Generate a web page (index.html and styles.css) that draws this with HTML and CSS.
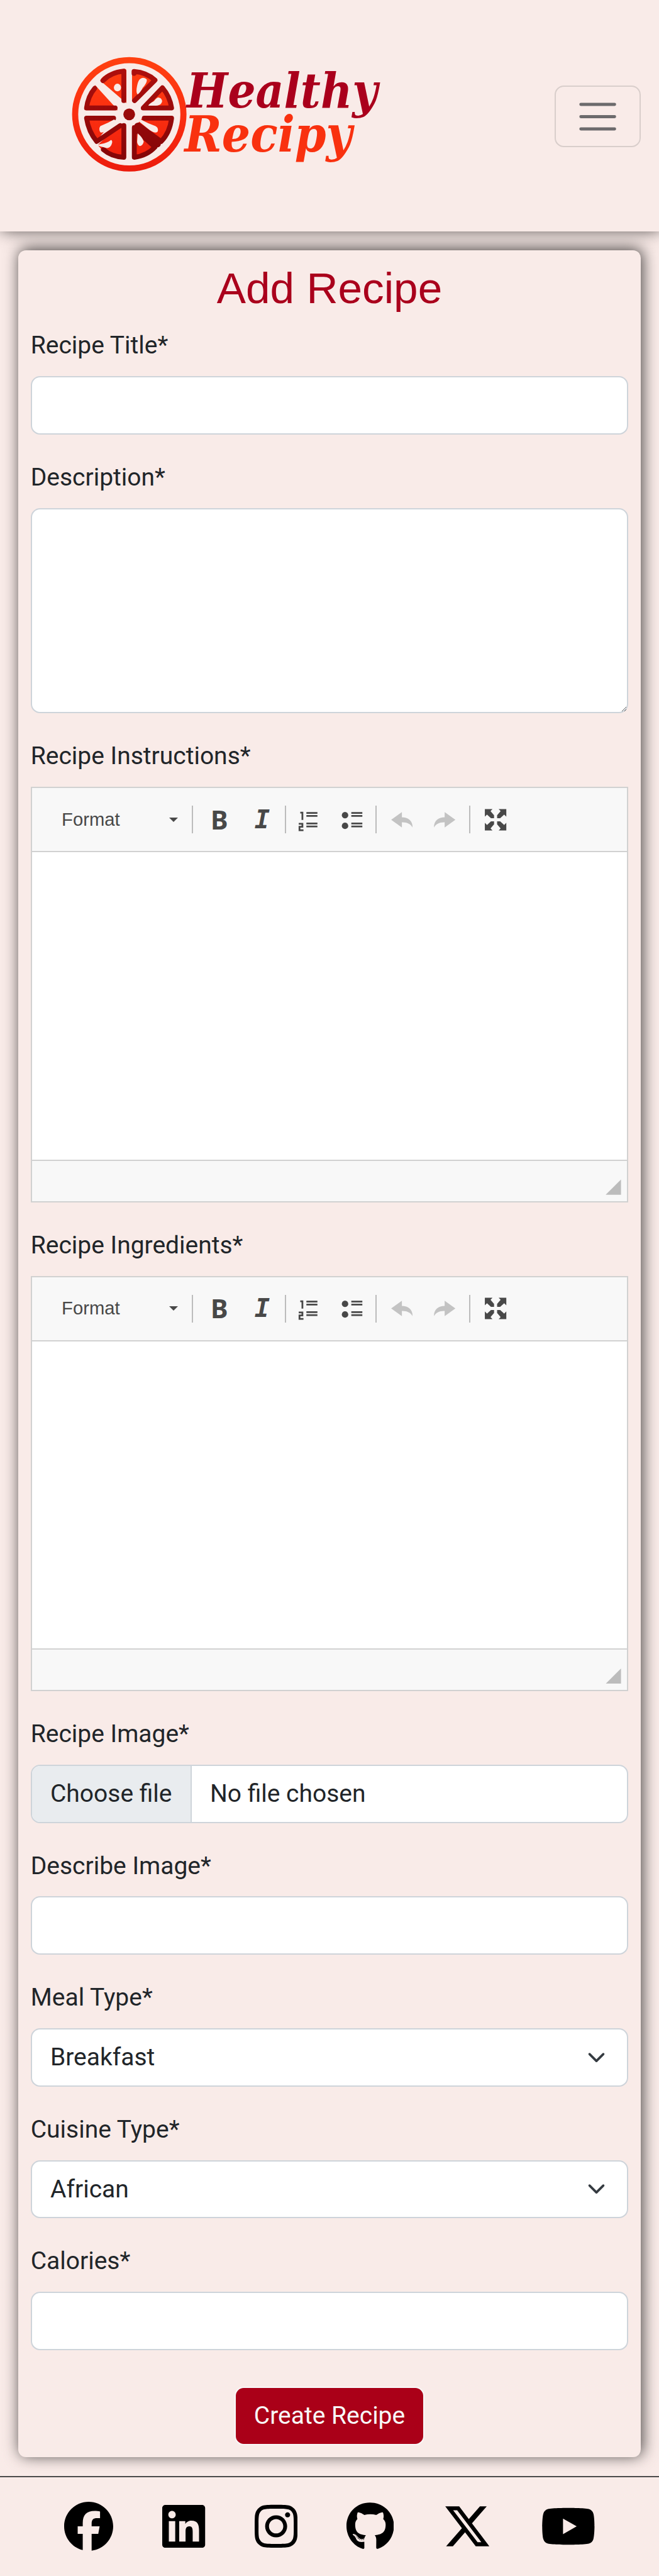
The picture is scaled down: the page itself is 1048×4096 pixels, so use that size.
FILE: index.html
```html
<!DOCTYPE html>
<html lang="en">
<head>
<meta charset="utf-8">
<title>Healthy Recipy - Add Recipe</title>
<link rel="stylesheet" href="styles.css">
</head>
<body>
<svg class="sprite" aria-hidden="true">
  <symbol id="i-ol" viewBox="0 0 16 16"><path d="M2 3.300h1.400v4.800M1 10.600h2.400v2H1.500v2.200h2.600M6 3.500h7.200M6 5.500h7.200M6 10.400h7.200M6 12.400h7.200" fill="none" stroke="currentColor" stroke-width="1.150"/></symbol>
  <symbol id="i-ul" viewBox="0 0 16 16"><circle cx="2.900" cy="5" r="2.100"/><circle cx="2.900" cy="12" r="2.100"/><path d="M7 3.500h7.200M7 5.500h7.200M7 10.400h7.200M7 12.400h7.200" fill="none" stroke="currentColor" stroke-width="1.150"/></symbol>
  <symbol id="i-undo" viewBox="0 0 16 16"><path d="M1 8 8 3v3.400c4 .1 7 2.200 7 6.600-1.300-2.300-3.500-3.500-7-3.400V13z"/></symbol>
  <symbol id="i-max" viewBox="0 0 16 16"><path d="M1 1h5L4.700 2.400 7 5v2H5L2.400 4.600 1 6z"/><path d="M15 1h-5l1.300 1.400L9 5v2h2l2.600-2.400L15 6zM1 15h5l-1.300-1.400L7 11V9H5l-2.600 2.400L1 10zM15 15h-5l1.300-1.400L9 11V9h2l2.600 2.400L15 10z"/></symbol>
</svg>

<header class="site-header">
  <a class="brand" href="#">
    <svg class="logo" viewBox="120 90 640 260" role="img" aria-label="Healthy Recipy">
      <defs>
        <linearGradient id="peel" gradientUnits="userSpaceOnUse" x1="0" y1="112" x2="0" y2="336"><stop offset="0" stop-color="#ff4111"/><stop offset=".5" stop-color="#fb2f10"/><stop offset="1" stop-color="#ec1b0c"/></linearGradient>
        <linearGradient id="rind" gradientUnits="userSpaceOnUse" x1="0" y1="135" x2="0" y2="313"><stop offset="0" stop-color="#ae0f0d"/><stop offset="1" stop-color="#840508"/></linearGradient>
      </defs>
      <circle cx="253.700" cy="224" r="106" fill="none" stroke="url(#peel)" stroke-width="12"/>
      <g fill="url(#peel)">
        <path d="M244 135Q248 135 248 139V202L197 158Q199 150 215 143T244 135z"/>
        <path d="M187 167 228 212 231 216H168Q165 216 166 210 171 185 187 167z"/>
        <path d="M259 137Q287 136 309 158L261 200 259 198z"/>
        <path d="M319 170Q337 188 340 211H280z"/>
        <path d="M168 230H226L190 276Q171 256 168 230z"/>
        <path d="M247 243V309Q220 308 198 291L192 284 237 242z"/>
        <path d="M260 245 306 285Q287 307 261 309z"/>
        <path d="M280 230H340Q337 260 317 278L272 240z"/>
      </g>
      <g fill="none" stroke="url(#rind)" stroke-width="9.500" stroke-linejoin="round" stroke-linecap="round">
        <path d="M202 158Q217 142 243 139.500V197"/>
        <path d="M186 173Q173 188 170 211.500H226"/>
        <path d="M263 144V140Q288 142 304 157L264 197"/>
        <path d="M318.500 172Q333 189 336.500 211.500H281z"/>
        <path d="M223 231.500H170Q174 258 190 277L236 246"/>
        <path d="M203 293Q219 307 243 308V246"/>
        <path d="M263.500 250V308Q288 305 304 288L264 252"/>
        <path d="M283 231.500H336.500Q333 260 316 277L272 245"/>
        <path d="M270 247 309 282" stroke-width="13"/>
      </g>
      <circle cx="253.500" cy="224" r="11.500" fill="url(#rind)"/>
      <g fill="#f9ebe8">
        <ellipse cx="230.500" cy="171.500" rx="7" ry="7.500"/>
        <path d="M276 154Q283 150 288 156 289 162 280 172 275 182 270 185 266 182 269 168 271 157 276 154z"/>
        <path d="M311 191Q317 192 318 198 317 206 306 207H291Q291 204 302 198 307 191 311 191z"/>
        <path d="M224 234 228 237 213 251Q203 262 197 259 193 253 197 247 212 241 224 234z"/>
        <path d="M276 234 273 238 290 252Q303 263 309 258 312 251 305 247 291 242 276 234z"/>
        <path d="M270 261Q279 268 282 277 280 286 274 286 269 283 269 277z"/>
        <path d="M198 282Q211 280 218 274 222 276 219 283 216 290 210 290L198 287 190 284z"/>
      </g>
      <text class="logo-top" x="366" y="210.500" font-size="95" textLength="374" lengthAdjust="spacingAndGlyphs">Healthy</text>
      <text class="logo-bottom" x="362" y="296.500" font-size="97" textLength="328" lengthAdjust="spacingAndGlyphs">Recipy</text>
    </svg>
  </a>
  <button class="toggler" type="button" aria-label="Toggle navigation">
    <svg viewBox="0 0 30 30"><path stroke="currentColor" stroke-linecap="round" stroke-miterlimit="10" stroke-width="2" d="M4 7h22M4 15h22M4 23h22"/></svg>
  </button>
</header>

<main class="card">
  <h1>Add Recipe</h1>
  <form>
    <div class="field"><label for="title">Recipe Title*</label><input id="title" class="control" type="text"></div>
    <div class="field"><label for="desc">Description*</label><textarea id="desc" class="control area"></textarea></div>
    <div class="field"><label>Recipe Instructions*</label>
      <div class="editor">
        <div class="toolbar">
          <div class="combo"><span>Format</span><i class="caret"></i></div>
          <div class="group g3"><b class="ico bold">B</b><i class="ico italic">I</i></div>
          <div class="group g1"><svg class="ico"><use href="#i-ol"/></svg><svg class="ico"><use href="#i-ul"/></svg></div>
          <div class="group g2 off"><svg class="ico"><use href="#i-undo"/></svg><svg class="ico flip"><use href="#i-undo"/></svg></div>
          <div class="group g2"><svg class="ico"><use href="#i-max"/></svg></div>
        </div>
        <div class="content"></div>
        <div class="bottom"><i class="grip"></i></div>
      </div>
    </div>
    <div class="field"><label>Recipe Ingredients*</label>
      <div class="editor">
        <div class="toolbar">
          <div class="combo"><span>Format</span><i class="caret"></i></div>
          <div class="group g3"><b class="ico bold">B</b><i class="ico italic">I</i></div>
          <div class="group g1"><svg class="ico"><use href="#i-ol"/></svg><svg class="ico"><use href="#i-ul"/></svg></div>
          <div class="group g2 off"><svg class="ico"><use href="#i-undo"/></svg><svg class="ico flip"><use href="#i-undo"/></svg></div>
          <div class="group g2"><svg class="ico"><use href="#i-max"/></svg></div>
        </div>
        <div class="content"></div>
        <div class="bottom"><i class="grip"></i></div>
      </div>
    </div>
    <div class="field"><label>Recipe Image*</label>
      <div class="control file"><span class="choose">Choose file</span><span class="name">No file chosen</span></div>
    </div>
    <div class="field"><label for="alt">Describe Image*</label><input id="alt" class="control" type="text"></div>
    <div class="field"><label>Meal Type*</label>
      <div class="control select"><span>Breakfast</span><svg viewBox="0 0 16 16"><path fill="none" stroke="#343a40" stroke-linecap="round" stroke-linejoin="round" stroke-width="2" d="m2 5 6 6 6-6"/></svg></div>
    </div>
    <div class="field"><label>Cuisine Type*</label>
      <div class="control select"><span>African</span><svg viewBox="0 0 16 16"><path fill="none" stroke="#343a40" stroke-linecap="round" stroke-linejoin="round" stroke-width="2" d="m2 5 6 6 6-6"/></svg></div>
    </div>
    <div class="field"><label for="cal">Calories*</label><input id="cal" class="control" type="text"></div>
    <button class="submit" type="button">Create Recipe</button>
  </form>
</main>

<footer class="social">
  <svg class="w32" viewBox="0 0 512 512"><path d="M512 256C512 114.600 397.400 0 256 0S0 114.600 0 256C0 376 82.700 476.800 194.200 504.500V334.200H141.400V256h52.800V222.300c0-87.100 39.400-127.500 125-127.500c16.200 0 44.200 3.200 55.700 6.400V172c-6-.6-16.500-1-29.600-1c-42 0-58.200 15.900-58.200 57.200V256h83.600l-14.400 78.200H287V510.100C413.800 494.800 512 386.900 512 256h0z"/></svg>
  <svg class="w28" viewBox="0 0 448 512"><path d="M416 32H31.900C14.300 32 0 46.500 0 64.300v383.400C0 465.500 14.300 480 31.900 480H416c17.600 0 32-14.500 32-32.300V64.300c0-17.800-14.400-32.300-32-32.300zM135.400 416H69V202.200h66.500V416zm-33.200-243c-21.300 0-38.500-17.300-38.500-38.500S80.900 96 102.200 96c21.200 0 38.500 17.300 38.500 38.500 0 21.300-17.200 38.500-38.500 38.500zm282.100 243h-66.400V312c0-24.800-.5-56.700-34.500-56.700-34.600 0-39.900 27-39.900 54.900V416h-66.400V202.200h63.700v29.200h.9c8.900-16.800 30.600-34.500 62.900-34.500 67.200 0 79.700 44.300 79.700 101.900V416z"/></svg>
  <svg class="w28" viewBox="0 0 448 512"><path d="M224.100 141c-63.600 0-114.900 51.300-114.900 114.900s51.300 114.900 114.900 114.900S339 319.500 339 255.900 287.700 141 224.100 141zm0 189.600c-41.100 0-74.700-33.500-74.700-74.700s33.500-74.700 74.700-74.700 74.700 33.500 74.700 74.700-33.600 74.700-74.700 74.700zm146.400-194.300c0 14.900-12 26.800-26.800 26.800-14.900 0-26.800-12-26.800-26.800s12-26.800 26.800-26.800 26.800 12 26.800 26.800zm76.100 27.200c-1.700-35.900-9.900-67.700-36.200-93.900-26.200-26.200-58-34.400-93.900-36.200-37-2.100-147.900-2.100-184.900 0-35.800 1.700-67.600 9.900-93.900 36.100s-34.400 58-36.200 93.900c-2.100 37-2.100 147.900 0 184.900 1.700 35.900 9.900 67.700 36.200 93.900s58 34.400 93.900 36.200c37 2.100 147.900 2.100 184.900 0 35.900-1.700 67.700-9.900 93.900-36.200 26.200-26.200 34.400-58 36.200-93.900 2.100-37 2.100-147.800 0-184.800zM398.800 388c-7.800 19.600-22.900 34.700-42.600 42.600-29.500 11.700-99.500 9-132.100 9s-102.700 2.600-132.100-9c-19.600-7.800-34.700-22.900-42.600-42.600-11.700-29.500-9-99.500-9-132.100s-2.600-102.700 9-132.100c7.800-19.600 22.900-34.700 42.600-42.600 29.500-11.700 99.500-9 132.100-9s102.700-2.600 132.100 9c19.600 7.800 34.700 22.900 42.600 42.600 11.700 29.500 9 99.500 9 132.100s2.700 102.700-9 132.100z"/></svg>
  <svg class="w31" viewBox="0 0 496 512"><path d="M165.900 397.400c0 2-2.300 3.600-5.200 3.600-3.300.3-5.600-1.300-5.600-3.600 0-2 2.300-3.600 5.200-3.600 3-.3 5.600 1.300 5.600 3.600zm-31.100-4.500c-.7 2 1.300 4.300 4.300 4.900 2.600 1 5.600 0 6.200-2s-1.300-4.300-4.300-5.200c-2.600-.7-5.500.3-6.200 2.300zm44.200-1.700c-2.900.7-4.900 2.600-4.600 4.900.3 2 2.900 3.300 5.900 2.600 2.900-.7 4.900-2.600 4.600-4.600-.3-1.900-3-3.200-5.900-2.900zM244.800 8C106.100 8 0 113.300 0 252c0 110.900 69.800 205.800 169.500 239.200 12.800 2.300 17.300-5.600 17.300-12.100 0-6.200-.3-40.400-.3-61.400 0 0-70 15-84.700-29.800 0 0-11.400-29.100-27.800-36.600 0 0-22.900-15.700 1.600-15.400 0 0 24.900 2 38.600 25.800 21.900 38.600 58.600 27.500 72.900 20.900 2.300-16 8.800-27.100 16-33.700-55.900-6.200-112.300-14.300-112.300-110.500 0-27.500 7.600-41.300 23.600-58.900-2.600-6.500-11.100-33.300 2.600-67.900 20.900-6.500 69 27 69 27 20-5.600 41.500-8.500 62.800-8.500s42.800 2.900 62.800 8.500c0 0 48.100-33.600 69-27 13.700 34.700 5.200 61.400 2.600 67.900 16 17.700 25.800 31.500 25.800 58.900 0 96.500-58.900 104.200-114.800 110.500 9.200 7.900 17 22.900 17 46.400 0 33.700-.3 75.400-.3 83.600 0 6.500 4.600 14.400 17.300 12.100C428.200 457.800 496 362.900 496 252 496 113.300 383.500 8 244.800 8zM97.200 352.900c-1.300 1-1 3.300.7 5.200 1.600 1.600 3.900 2.300 5.200 1 1.300-1 1-3.300-.7-5.200-1.600-1.600-3.900-2.300-5.200-1zm-10.800-8.100c-.7 1.300.3 2.900 2.300 3.900 1.600 1 3.600.7 4.300-.7.7-1.300-.3-2.900-2.300-3.900-2-.6-3.600-.3-4.300.7zm32.400 35.600c-1.600 1.300-1 4.300 1.300 6.200 2.300 2.300 5.200 2.600 6.500 1 1.300-1.300.7-4.300-1.300-6.200-2.200-2.300-5.200-2.600-6.500-1zm-11.400-14.700c-1.600 1-1.600 3.600 0 5.900 1.600 2.300 4.300 3.300 5.600 2.300 1.600-1.300 1.600-3.900 0-6.200-1.400-2.300-4-3.300-5.600-2z"/></svg>
  <svg class="w32" viewBox="0 0 512 512"><path d="M389.200 48h70.600L305.600 224.200 487 464H345L233.700 318.600 106.500 464H35.800L200.700 275.500 26.800 48H172.400L272.900 180.900 389.200 48zM364.400 421.800h39.100L151.100 88h-42L364.400 421.800z"/></svg>
  <svg class="w36" viewBox="0 0 576 512"><path d="M549.655 124.083c-6.281-23.650-24.787-42.276-48.284-48.597C458.781 64 288 64 288 64S117.220 64 74.629 75.486c-23.497 6.322-42.003 24.947-48.284 48.597-11.412 42.867-11.412 132.305-11.412 132.305s0 89.438 11.412 132.305c6.281 23.650 24.787 41.500 48.284 47.821C117.220 448 288 448 288 448s170.781 0 213.371-11.486c23.497-6.321 42.003-24.171 48.284-47.821 11.412-42.867 11.412-132.305 11.412-132.305s0-89.438-11.412-132.305zm-317.510 213.508V175.185l142.739 81.205-142.739 81.201z"/></svg>
</footer>
</body>
</html>
```
FILE: styles.css
```css
*, *::before, *::after { box-sizing: border-box; }

html { font-size: 38.9953px; }

body {
  margin: 0;
  height: 4096px;
  overflow: hidden;
  background: #f9ebe8;
  color: #212529;
  font-family: Roboto, sans-serif;
  font-size: 1rem;
  line-height: 1.5;
}

.sprite { position: absolute; width: 0; height: 0; }

.site-header {
  display: flex;
  justify-content: space-between;
  align-items: center;
  height: 9.4375rem;
  padding: 0 .75rem 0 2.5rem;
  background: #f9ebe8;
  box-shadow: .0625rem -.0625rem .625rem rgba(0, 0, 0, .7);
}

.brand { display: block; margin-top: -.27rem; }
.logo { display: block; width: 13.3333rem; height: 5.4167rem; overflow: visible; }
.logo text { font-family: "DejaVu Serif", serif; font-weight: 700; font-style: italic; }
.logo-top { fill: #aa001c; }
.logo-bottom { fill: #f9310f; }

.toggler {
  width: 3.5rem;
  height: 2.5rem;
  margin-top: .0625rem;
  padding: 0;
  border: .0625rem solid rgba(33, 37, 41, .15);
  border-radius: .375rem;
  background: transparent;
  color: rgba(33, 37, 41, .65);
  display: flex;
  align-items: center;
  justify-content: center;
}
.toggler svg { width: 1.875rem; height: 1.875rem; }

.card {
  height: 90rem;
  margin: .765rem .75rem 0;
  padding: .5rem;
  border-radius: .3125rem;
  background: #f9ebe8;
  box-shadow: .0625rem -.0625rem .625rem rgba(0, 0, 0, .7);
}

h1 {
  margin: 0 0 .5rem;
  height: 2.134rem;
  color: #aa001c;
  font-family: "Liberation Sans", Arial, sans-serif;
  font-size: 1.778rem;
  font-weight: 400;
  line-height: 1.2;
  text-align: center;
}

.field { margin-bottom: 1rem; }
label { display: block; height: 1.5rem; margin-bottom: .5rem; }

.control {
  display: block;
  width: 100%;
  height: 2.375rem;
  border: .0625rem solid #ced4da;
  border-radius: .375rem;
  background: #fff;
  font: inherit;
}
.area { height: 8.375rem; resize: vertical; }

.file { display: flex; overflow: hidden; }
.choose {
  padding: .375rem .75rem;
  border-right: .0625rem solid #ced4da;
  background: #e9ecef;
}
.name { padding: .375rem .75rem; }

.select {
  display: flex;
  justify-content: space-between;
  align-items: center;
  padding: 0 .75rem;
}
.select svg { width: 1rem; height: .75rem; }

.editor {
  display: flex;
  flex-direction: column;
  height: 16.9375rem;
  border: .0625rem solid #d1d1d1;
  background: #fff;
}
.toolbar {
  display: flex;
  align-items: center;
  height: 2.625rem;
  border-bottom: .0625rem solid #d1d1d1;
  background: #f8f8f8;
  color: #484848;
}
.combo {
  display: flex;
  align-items: center;
  justify-content: space-between;
  width: 6.515rem;
  padding: 0 .57rem 0 1.215rem;
  font: .75rem/1 "Liberation Sans", Arial, sans-serif;
}
.caret {
  border: .1875rem solid transparent;
  border-top-color: #484848;
  border-bottom: 0;
}
.group {
  display: flex;
  align-items: center;
  height: 1.125rem;
  border-left: .0625rem solid #bcbcbc;
}
.g3 { padding: 0 .0625rem 0 .2rem; }
.g1 { padding: 0 .0625rem 0 .075rem; }
.g2 { padding: 0 .125rem 0 .14rem; }
.off { color: #c3c3c3; }
.ico { width: 1.75rem; height: 1rem; fill: currentColor; }
.bold,
.italic { line-height: 1rem; text-align: center; }
.bold { font-family: "Noto Sans", sans-serif; font-size: 1.0625rem; font-weight: 700; }
.italic { font-family: "DejaVu Sans Mono", monospace; font-size: 1.04rem; font-weight: 700; }
.flip { transform: scaleX(-1); }
.content { flex: 1; }
.bottom {
  display: flex;
  justify-content: flex-end;
  align-items: flex-end;
  height: 1.6875rem;
  padding: 0 .25rem .25rem;
  border-top: .0625rem solid #d1d1d1;
  background: #f8f8f8;
}
.grip {
  width: .625rem;
  height: .625rem;
  background: #bcbcbc;
  clip-path: polygon(100% 0, 100% 100%, 0 100%);
}

.submit {
  display: block;
  height: 2.375rem;
  margin: 1.5rem auto 0;
  padding: 0 .75rem;
  border: .0625rem solid #f8f8f8;
  border-radius: .375rem;
  background: #aa0018;
  color: #f8f8f8;
  font: inherit;
}

.social {
  display: flex;
  justify-content: center;
  gap: 2rem;
  height: 4.0625rem;
  margin-top: .75rem;
  padding: 1.01rem 0 0 .0625rem;
  border-top: .0625rem solid #4b4b4b;
}
.social svg { height: 2rem; }
.w28 { width: 1.75rem; }
.w31 { width: 1.9375rem; }
.w32 { width: 2rem; }
.w36 { width: 2.25rem; }
```
